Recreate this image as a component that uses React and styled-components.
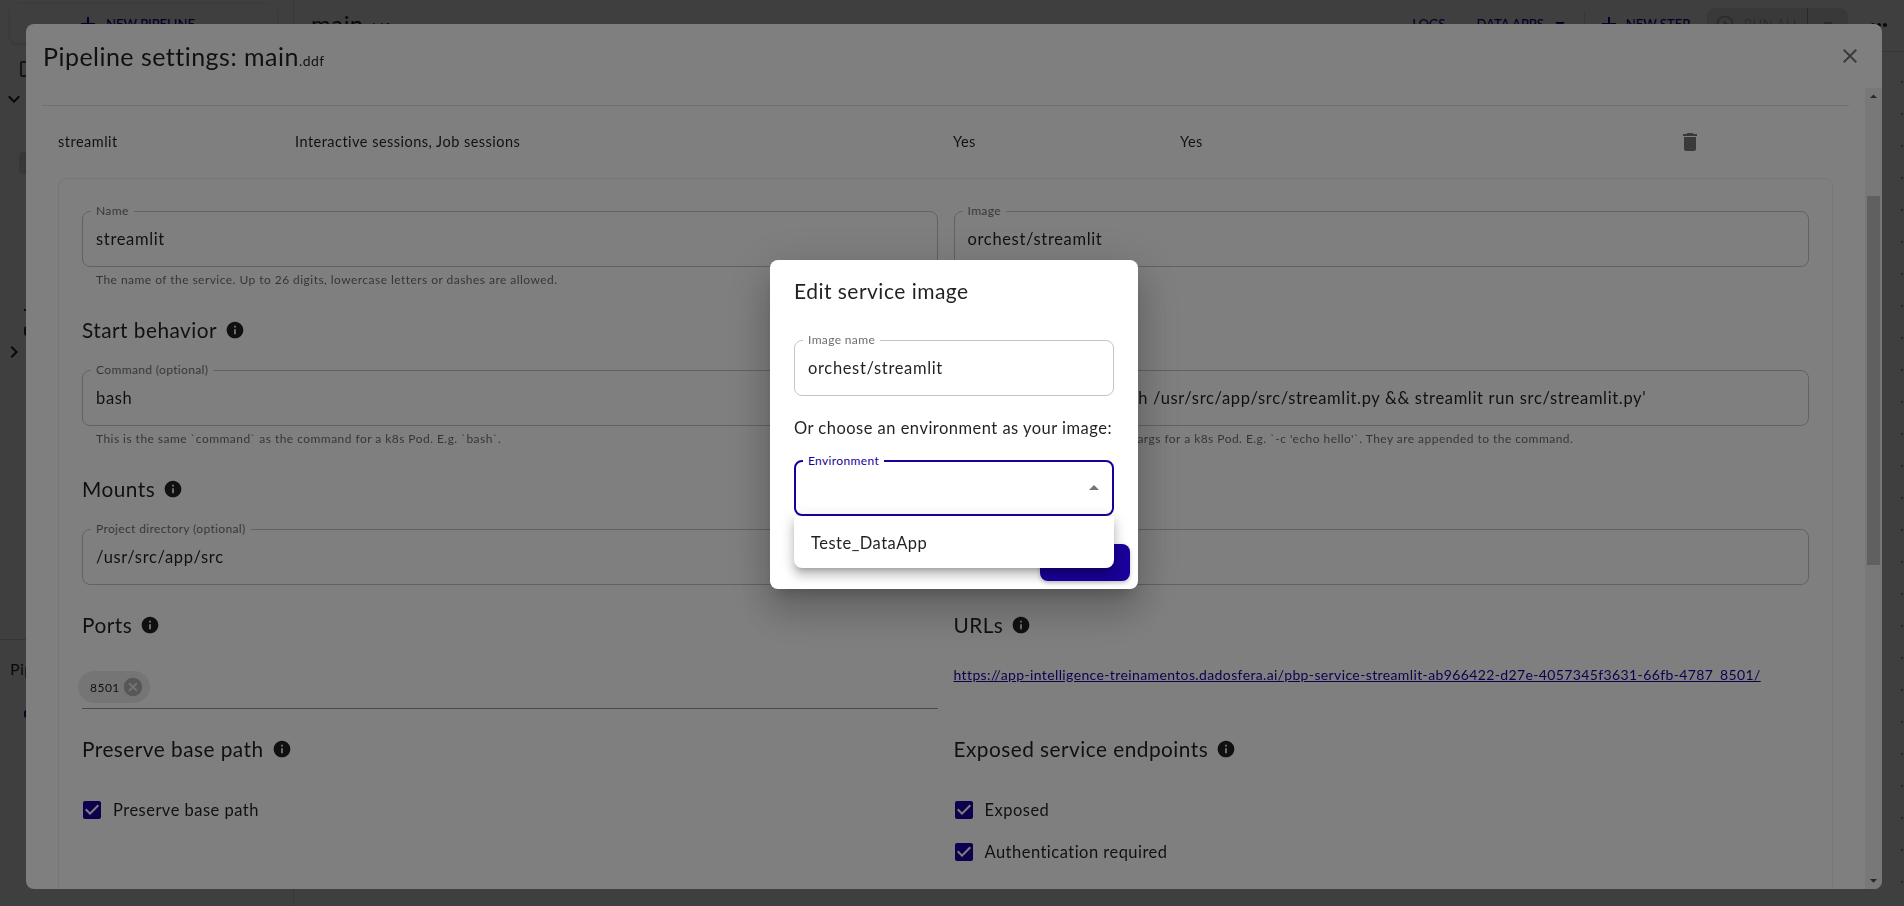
import styled, { createGlobalStyle } from "styled-components";

const PRIMARY = "#1a009b";

const ICONS = {
  close: "M19 6.41 17.59 5 12 10.59 6.41 5 5 6.41 10.59 12 5 17.59 6.41 19 12 13.41 17.59 19 19 17.59 13.41 12z",
  trash: "M6 19c0 1.1.9 2 2 2h8c1.1 0 2-.9 2-2V7H6v12zM19 4h-3.5l-1-1h-5l-1 1H5v2h14V4z",
  info: "M12 2C6.48 2 2 6.48 2 12s4.48 10 10 10 10-4.48 10-10S17.52 2 12 2zm1 15h-2v-6h2v6zm0-8h-2V7h2v2z",
  cancel: "M12 2C6.47 2 2 6.47 2 12s4.47 10 10 10 10-4.47 10-10S17.53 2 12 2zm5 13.59L15.59 17 12 13.41 8.41 17 7 15.59 10.59 12 7 8.41 8.41 7 12 10.59 15.59 7 17 8.41 13.41 12 17 15.59z",
  check: "M19 3H5c-1.11 0-2 .9-2 2v14c0 1.1.89 2 2 2h14c1.11 0 2-.9 2-2V5c0-1.1-.89-2-2-2zm-9 14l-5-5 1.41-1.41L10 14.17l7.59-7.59L19 8l-9 9z",
  up: "m7 14 5-5 5 5z",
  down: "m7 10 5 5 5-5z",
  add: "M19 13h-6v6h-2v-6H5v-2h6V5h2v6h6v2z",
  expand: "M16.59 8.59 12 13.17 7.41 8.59 6 10l6 6 6-6z",
  chevron: "M10 6 8.59 7.41 13.17 12l-4.58 4.59L10 18l6-6z",
  more: "M6 10c-1.1 0-2 .9-2 2s.9 2 2 2 2-.9 2-2-.9-2-2-2zm12 0c-1.1 0-2 .9-2 2s.9 2 2 2 2-.9 2-2-.9-2-2-2zm-6 0c-1.1 0-2 .9-2 2s.9 2 2 2 2-.9 2-2-.9-2-2-2z",
  play: "M12 2a10 10 0 1 0 0 20 10 10 0 0 0 0-20zm0 18a8 8 0 1 1 0-16 8 8 0 0 1 0 16zm-2-12.5v9l6-4.5z",
};

const Svg = styled.svg`
  flex: none;
  display: block;
  width: ${(p) => p.$size || 24}px;
  height: ${(p) => p.$size || 24}px;
  fill: ${(p) => p.$color || "currentColor"};
`;

function Icon({ name, size, color }) {
  return (
    <Svg viewBox="0 0 24 24" $size={size} $color={color}>
      <path d={ICONS[name]} />
    </Svg>
  );
}

const Global = createGlobalStyle`
  html, body { margin: 0; height: 100%; overflow: hidden; background: #fff; }
  body {
    font-family: Lato, "Open Sans", sans-serif;
    color: rgba(0, 0, 0, 0.87);
    letter-spacing: 0.03em;
  }
  * { box-sizing: border-box; }
`;

const Page = styled.div`
  display: flex;
  height: 906px;
`;

/* the app behind the two dialogs */
const Sidebar = styled.aside`
  width: 294px;
  flex: none;
  display: flex;
  flex-direction: column;
  padding-top: 4px;
  border-right: 1px solid #e0e0e0;
`;
const NewPipeline = styled.div`
  height: 39px;
  margin: 0 16px 0 10px;
  border-radius: 8px;
  box-shadow: 0 1px 4px rgba(0, 0, 0, 0.2);
  display: flex;
  justify-content: center;
  align-items: center;
  gap: 6px;
  padding-right: 16px;
  color: ${PRIMARY};
  font-size: 13px;
  font-weight: 500;
  letter-spacing: 0;
`;
const ToolIcon = styled.div`
  width: 16px;
  height: 16px;
  margin: 18px 0 0 20px;
  border: 2px solid #555;
  border-radius: 2px;
`;
const TreeToggle = styled.div`
  margin: ${(p) => p.$top}px 0 0 2px;
  height: 24px;
  color: #222;
`;
const SelectedRow = styled.div`
  height: 22px;
  margin: 41px 0 0 19px;
  border-radius: 4px;
  background: rgba(80, 80, 130, 0.18);
`;
const TreeSpeck = styled.div`
  width: 4px;
  height: 2px;
  margin: 135px 0 0 24px;
  background: #333;
`;
const TreeIcon = styled.div`
  width: 10px;
  height: 10px;
  margin: 15px 0 0 24px;
  border: 2px solid #333;
  border-radius: 3px;
`;
const SideSection = styled.div`
  margin-top: 275px;
  border-top: 1px solid #d6d6d6;
  padding: 19px 0 0 10px;
  font-size: 16px;
`;
const SideDot = styled.div`
  width: 6px;
  height: 8px;
  margin: 32px 0 0 14px;
  border-radius: 3px;
  background: ${PRIMARY};
`;
const Main = styled.main`
  flex: 1;
  display: flex;
  flex-direction: column;
`;
const TopBar = styled.header`
  height: 52px;
  flex: none;
  display: flex;
  align-items: flex-start;
  padding: 8px 13px 0 17px;
  border-bottom: 1px solid #ddd;
`;
const PipelineName = styled.div`
  font-size: 24px;
  margin-right: auto;
  line-height: 32px;
  span { font-size: 14px; }
`;
const TopAction = styled.div`
  display: flex;
  align-items: center;
  gap: ${(p) => p.$inner || 4}px;
  height: 32px;
  margin-right: ${(p) => p.$gap}px;
  color: ${PRIMARY};
  font-size: 13px;
  font-weight: 500;
  letter-spacing: 0;
`;
const TopDivider = styled.div`
  width: 1px;
  height: 36px;
  margin: 4px 12px 0 0;
  background: #ddd;
`;
const RunAll = styled.div`
  width: 141px;
  height: 32px;
  flex: none;
  margin-right: 19px;
  display: flex;
  align-items: center;
  border-radius: 8px;
  background: rgba(0, 0, 0, 0.1);
  color: rgba(0, 0, 0, 0.26);
  font-size: 13px;
`;
const RunLabel = styled.div`
  width: 101px;
  height: 100%;
  display: flex;
  align-items: center;
  gap: 9px;
  padding-left: 8px;
  border-right: 1px solid rgba(0, 0, 0, 0.3);
`;
const RunArrow = styled.div`
  flex: 1;
  display: flex;
  justify-content: center;
`;
const MoreSlot = styled.div`
  margin-top: 5px;
  color: #222;
`;
const Canvas = styled.div`
  flex: 1;
  background-image: radial-gradient(circle, #9a9a9a 1px, transparent 1.5px);
  background-size: 32px 32px;
  background-position: -8px 14px;
`;

/* stacked dialogs */
const Backdrop = styled.div`
  position: fixed;
  inset: 0;
  background: rgba(0, 0, 0, 0.5);
  display: flex;
  align-items: flex-start;
`;
const SettingsBackdrop = styled(Backdrop)`
  padding: 24px 0 0 26px;
`;
const EditBackdrop = styled(Backdrop)`
  justify-content: center;
  padding: 260px 0 0 4px;
`;
const Settings = styled.section`
  width: 1856px;
  height: 865px;
  display: flex;
  flex-direction: column;
  overflow: hidden;
  background: #fff;
  border-radius: 8px;
`;
const SettingsHeader = styled.div`
  height: 64px;
  flex: none;
  display: flex;
  justify-content: space-between;
  align-items: center;
  padding: 0 20px 0 17px;
`;
const SettingsTitle = styled.h2`
  margin: 0;
  font-size: 25px;
  font-weight: 400;
  span { font-size: 14px; }
`;
const SettingsBody = styled.div`
  flex: 1;
  min-height: 0;
  display: flex;
`;
const Scroller = styled.div`
  flex: 1;
  min-width: 0;
  overflow: hidden;
  padding: 17px 16px 0;
`;
const ServiceRow = styled.div`
  height: 73px;
  display: grid;
  grid-template-columns: 237px 658px 227px 498px 1fr;
  align-items: center;
  padding-left: 16px;
  border-top: 1px solid #e0e0e0;
  font-size: 14.5px;
  span { margin-bottom: 1px; }
`;
const Card = styled.div`
  margin: 0 16px;
  padding: 32px 23px;
  border: 1px solid #ededed;
  border-radius: 8px;
  display: grid;
  grid-template-columns: 1fr 1fr;
  column-gap: 16px;
  row-gap: 24px;
`;
const Heading = styled.h3`
  margin: 0;
  height: 32px;
  display: flex;
  align-items: center;
  gap: 8px;
  font-size: 20.8px;
  font-weight: 400;
  grid-column: ${(p) => (p.$wide ? "1 / -1" : "auto")};
`;
const Lifted = styled.span`
  margin-bottom: 1px;
`;
const FieldBox = styled.div`
  position: relative;
  height: 56px;
  display: flex;
  align-items: center;
  padding: 0 13px 1px;
  border: ${(p) => (p.$focused ? `2px solid ${PRIMARY}` : "1px solid rgba(0, 0, 0, 0.23)")};
  border-radius: 8px;
  font-size: 16.5px;
  letter-spacing: 0.04em;
  white-space: nowrap;
`;
const FieldLabel = styled.label`
  position: absolute;
  top: -9px;
  left: ${(p) => (p.$focused ? 7 : 8)}px;
  padding: 0 5px;
  background: #fff;
  font-size: 12px;
  line-height: 15px;
  letter-spacing: 0.03em;
  color: ${(p) => (p.$focused ? PRIMARY : "rgba(0, 0, 0, 0.6)")};
`;
const Helper = styled.p`
  margin: 3px 14px 0;
  font-size: 12px;
  line-height: 20px;
  letter-spacing: 0.038em;
  color: rgba(0, 0, 0, 0.6);
`;
const PortsInput = styled.div`
  height: 44px;
  padding: 6px 0 0 0;
  border-bottom: 1px solid rgba(0, 0, 0, 0.42);
`;
const Chip = styled.div`
  width: 72px;
  height: 32px;
  margin-left: -4px;
  display: flex;
  align-items: center;
  justify-content: space-between;
  padding: 0 6px 0 12px;
  border-radius: 16px;
  background: rgba(0, 0, 0, 0.08);
  font-size: 12px;
`;
const UrlLink = styled.a`
  align-self: start;
  line-height: 20px;
  font-size: 14px;
  letter-spacing: 0.027em;
  color: ${PRIMARY};
  text-decoration: underline;
`;
const CheckList = styled.div`
  display: flex;
  flex-direction: column;
`;
const CheckRow = styled.label`
  height: 42px;
  margin-left: -2px;
  display: flex;
  align-items: center;
  gap: 9px;
  font-size: 16.5px;
`;
const Scrollbar = styled.div`
  width: 17px;
  flex: none;
  display: flex;
  flex-direction: column;
  background: #f1f1f1;
`;
const ScrollArrow = styled.div`
  height: 17px;
  flex: none;
  display: flex;
  align-items: center;
  justify-content: center;
  color: #505050;
`;
const ScrollTrack = styled.div`
  flex: 1;
  padding-top: 91px;
`;
const ScrollThumb = styled.div`
  height: 369px;
  margin: 0 2px;
  background: #c1c1c1;
`;

const EditDialog = styled.section`
  width: 368px;
  height: 329px;
  background: #fff;
  border-radius: 8px;
  box-shadow: 0 11px 15px -7px rgba(0, 0, 0, 0.2), 0 24px 38px 3px rgba(0, 0, 0, 0.14),
    0 9px 46px 8px rgba(0, 0, 0, 0.12);
  padding: 15px 24px 0;
  display: flex;
  flex-direction: column;
`;
const EditTitle = styled.h2`
  margin: 0 0 33px;
  font-size: 21px;
  line-height: 32px;
  font-weight: 400;
`;
const EditHint = styled.p`
  margin: 20px 0;
  font-size: 16.5px;
  line-height: 24px;
  white-space: nowrap;
`;
const ArrowSlot = styled.div`
  margin: 1px -7px 0 auto;
  color: rgba(0, 0, 0, 0.54);
`;
const Popup = styled.div`
  position: absolute;
  z-index: 2;
  top: calc(100% + 2px);
  left: -2px;
  right: -2px;
  height: 52px;
  padding: 2px 0 0 17px;
  display: flex;
  align-items: center;
  background: #fff;
  border-radius: 0 0 8px 8px;
  box-shadow: 0 5px 5px -3px rgba(0, 0, 0, 0.2), 0 8px 10px 1px rgba(0, 0, 0, 0.14),
    0 3px 14px 2px rgba(0, 0, 0, 0.12);
  font-size: 16.5px;
  letter-spacing: 0.03em;
`;
const SaveButton = styled.button`
  align-self: flex-end;
  width: 90px;
  height: 37px;
  margin: 28px -16px 0 0;
  border: 0;
  border-radius: 8px;
  background: ${PRIMARY};
  color: #fff;
  font: inherit;
  font-size: 14px;
  font-weight: 500;
  box-shadow: 0 2px 4px rgba(0, 0, 0, 0.25);
`;

const Field = ({ label, value, helper }) => (
  <div>
    <FieldBox>
      <FieldLabel>{label}</FieldLabel>
      {value}
    </FieldBox>
    {helper && <Helper>{helper}</Helper>}
  </div>
);

const Check = ({ children }) => (
  <CheckRow>
    <Icon name="check" color={PRIMARY} />
    <Lifted>{children}</Lifted>
  </CheckRow>
);

const Title = ({ children, wide }) => (
  <Heading $wide={wide}>
    <Lifted>{children}</Lifted>
    <Icon name="info" size={20} color="rgba(0,0,0,0.87)" />
  </Heading>
);

export default function App() {
  return (
    <>
      <Global />
      <Page>
        <Sidebar>
          <NewPipeline>
            <Icon name="add" />
            NEW PIPELINE
          </NewPipeline>
          <ToolIcon />
          <TreeToggle $top={10}>
            <Icon name="expand" />
          </TreeToggle>
          <SelectedRow />
          <TreeSpeck />
          <TreeIcon />
          <TreeToggle $top={4}>
            <Icon name="chevron" />
          </TreeToggle>
          <SideSection>
            Pipeline
            <SideDot />
          </SideSection>
        </Sidebar>
        <Main>
          <TopBar>
            <PipelineName>
              main<span>.ddf</span>
            </PipelineName>
            <TopAction $gap={31}>LOGS</TopAction>
            <TopAction $gap={12}>
              DATA APPS
              <Icon name="down" />
            </TopAction>
            <TopDivider />
            <TopAction $gap={17} $inner={5}>
              <Icon name="add" />
              NEW STEP
            </TopAction>
            <RunAll>
              <RunLabel>
                <Icon name="play" size={20} />
                RUN ALL
              </RunLabel>
              <RunArrow>
                <Icon name="down" />
              </RunArrow>
            </RunAll>
            <MoreSlot>
              <Icon name="more" />
            </MoreSlot>
          </TopBar>
          <Canvas />
        </Main>
      </Page>

      <SettingsBackdrop>
        <Settings>
          <SettingsHeader>
            <SettingsTitle>
              Pipeline settings: main<span>.ddf</span>
            </SettingsTitle>
            <Icon name="close" color="rgba(0,0,0,0.54)" />
          </SettingsHeader>
          <SettingsBody>
            <Scroller>
              <ServiceRow>
                <span>streamlit</span>
                <span>Interactive sessions, Job sessions</span>
                <span>Yes</span>
                <span>Yes</span>
                <Icon name="trash" color="rgba(0,0,0,0.54)" />
              </ServiceRow>
              <Card>
                <Field
                  label="Name"
                  value="streamlit"
                  helper="The name of the service. Up to 26 digits, lowercase letters or dashes are allowed."
                />
                <Field label="Image" value="orchest/streamlit" />
                <Title wide>Start behavior</Title>
                <Field
                  label="Command (optional)"
                  value="bash"
                  helper="This is the same `command` as the command for a k8s Pod. E.g. `bash`."
                />
                <Field
                  label="Args (optional)"
                  value="-c 'umask 002 && bash /usr/src/app/src/streamlit.py && streamlit run src/streamlit.py'"
                  helper="This is the same `args` as the args for a k8s Pod. E.g. `-c 'echo hello'`. They are appended to the command."
                />
                <Title wide>Mounts</Title>
                <Field label="Project directory (optional)" value="/usr/src/app/src" />
                <Field label="Data directory (optional)" value="" />
                <Title>Ports</Title>
                <Title>URLs</Title>
                <PortsInput>
                  <Chip>
                    8501
                    <Icon name="cancel" size={22} color="rgba(0,0,0,0.26)" />
                  </Chip>
                </PortsInput>
                <UrlLink href="#">
                  https://app-intelligence-treinamentos.dadosfera.ai/pbp-service-streamlit-ab966422-d27e-4057345f3631-66fb-4787_8501/
                </UrlLink>
                <Title>Preserve base path</Title>
                <Title>Exposed service endpoints</Title>
                <CheckList>
                  <Check>Preserve base path</Check>
                </CheckList>
                <CheckList>
                  <Check>Exposed</Check>
                  <Check>Authentication required</Check>
                </CheckList>
              </Card>
            </Scroller>
            <Scrollbar>
              <ScrollArrow>
                <Icon name="up" size={17} />
              </ScrollArrow>
              <ScrollTrack>
                <ScrollThumb />
              </ScrollTrack>
              <ScrollArrow>
                <Icon name="down" size={17} />
              </ScrollArrow>
            </Scrollbar>
          </SettingsBody>
        </Settings>
      </SettingsBackdrop>

      <EditBackdrop>
        <EditDialog>
          <EditTitle>Edit service image</EditTitle>
          <FieldBox>
            <FieldLabel>Image name</FieldLabel>
            orchest/streamlit
          </FieldBox>
          <EditHint>Or choose an environment as your image:</EditHint>
          <FieldBox $focused>
            <FieldLabel $focused>Environment</FieldLabel>
            <ArrowSlot>
              <Icon name="up" />
            </ArrowSlot>
            <Popup>Teste_DataApp</Popup>
          </FieldBox>
          <SaveButton>SAVE</SaveButton>
        </EditDialog>
      </EditBackdrop>
    </>
  );
}
